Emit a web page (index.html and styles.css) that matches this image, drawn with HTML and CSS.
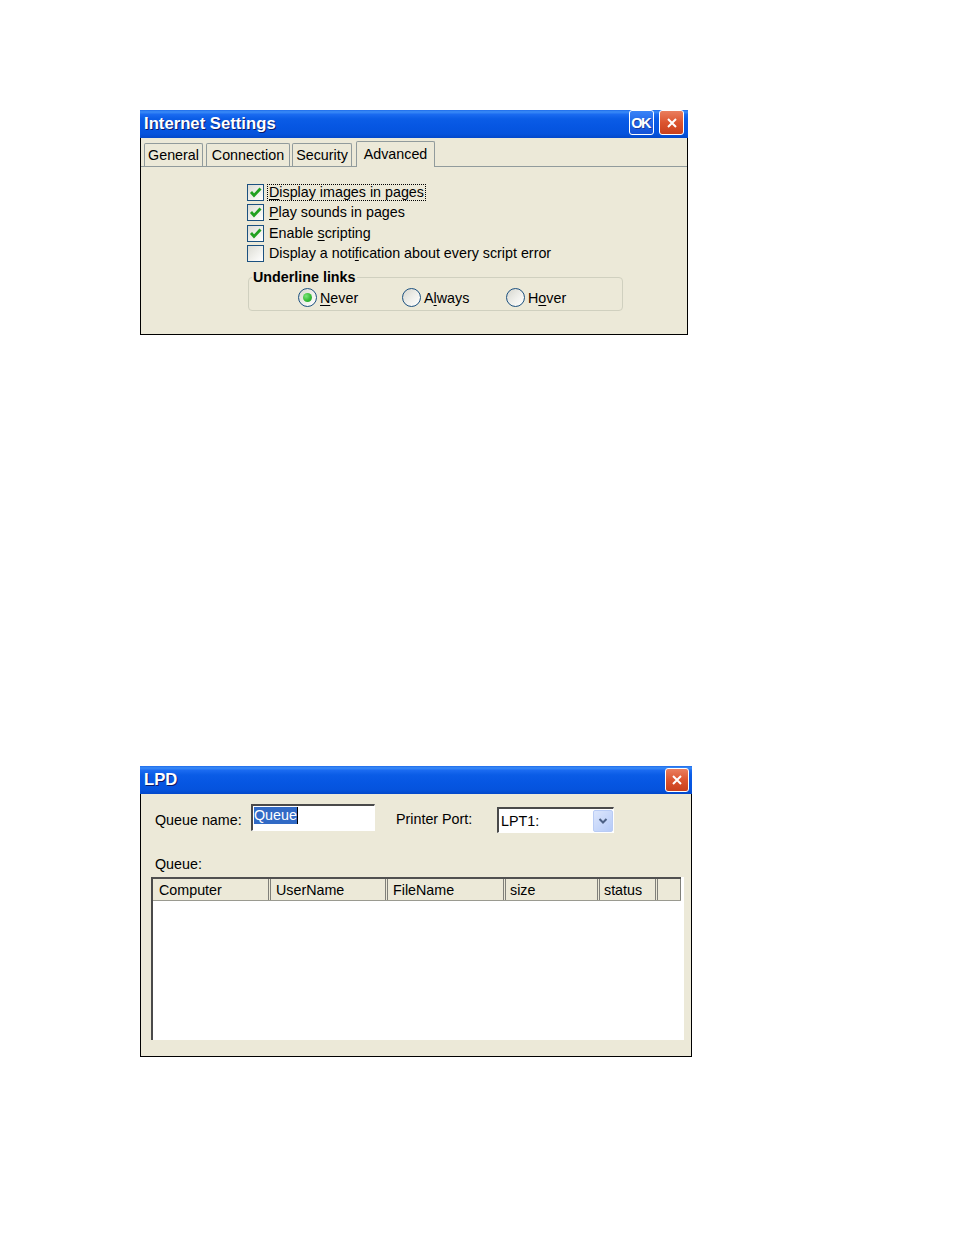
FILE: index.html
```html
<!DOCTYPE html>
<html>
<head>
<meta charset="utf-8">
<title>Settings</title>
<link rel="stylesheet" href="styles.css">
</head>
<body>
<div class="win win-inet">
  <div class="titlebar">
    <span class="title">Internet Settings</span>
    <span class="tb-btn tb-ok">OK</span>
    <span class="tb-btn tb-close"><svg viewBox="0 0 22 22" width="22" height="22"><path d="M7 7 L15 15 M15 7 L7 15" stroke="#fff" stroke-width="2" fill="none"/></svg></span>
  </div>
  <div class="body body-inet">
    <div class="tabs">
      <span class="tab tab-general">General</span>
      <span class="tab tab-conn">Connection</span>
      <span class="tab tab-sec">Security</span>
      <span class="tab tab-adv tab-active">Advanced</span>
      <span class="tab-fill"></span>
    </div>
    <div class="panel">
      <div class="chk-row"><span class="chk"><svg viewBox="0 0 15 15" width="15" height="15"><path d="M3 7 L6 10.5 L12.5 3.5" stroke="#21A121" stroke-width="2.8" fill="none"/></svg></span><span class="lbl focus"><u>D</u>isplay images in pages</span></div>
      <div class="chk-row"><span class="chk"><svg viewBox="0 0 15 15" width="15" height="15"><path d="M3 7 L6 10.5 L12.5 3.5" stroke="#21A121" stroke-width="2.8" fill="none"/></svg></span><span class="lbl"><u>P</u>lay sounds in pages</span></div>
      <div class="chk-row"><span class="chk"><svg viewBox="0 0 15 15" width="15" height="15"><path d="M3 7 L6 10.5 L12.5 3.5" stroke="#21A121" stroke-width="2.8" fill="none"/></svg></span><span class="lbl">Enable <u>s</u>cripting</span></div>
      <div class="chk-row"><span class="chk"></span><span class="lbl">Display a noti<u>f</u>ication about every script error</span></div>
      <fieldset class="group">
        <legend>Underline links</legend>
        <div class="radios">
          <span class="radio-item"><span class="radio on"><span class="dot"></span></span><span class="rlbl"><u>N</u>ever</span></span>
          <span class="radio-item"><span class="radio"></span><span class="rlbl">A<u>l</u>ways</span></span>
          <span class="radio-item"><span class="radio"></span><span class="rlbl">H<u>o</u>ver</span></span>
        </div>
      </fieldset>
    </div>
  </div>
</div>

<div class="win win-lpd">
  <div class="titlebar">
    <span class="title">LPD</span>
    <span class="tb-btn tb-close tb-close-lpd"><svg viewBox="0 0 22 22" width="22" height="22"><path d="M7 7 L15 15 M15 7 L7 15" stroke="#fff" stroke-width="2" fill="none"/></svg></span>
  </div>
  <div class="body body-lpd">
    <div class="row-top">
      <span class="flabel flabel-queue">Queue name:</span>
      <span class="textbox"><span class="sel">Queue</span><span class="caret"></span></span>
      <span class="flabel flabel-port">Printer Port:</span>
      <span class="combo"><span class="combo-text">LPT1:</span><span class="combo-btn"><svg viewBox="0 0 12 8" width="12" height="8"><path d="M2.5 2 L6 5.5 L9.5 2" stroke="#4D6185" stroke-width="2" fill="none"/></svg></span></span>
    </div>
    <div class="queue-label">Queue:</div>
    <div class="list">
      <div class="list-head">
        <span class="hcell hc-computer">Computer</span>
        <span class="hcell hc-user">UserName</span>
        <span class="hcell hc-file">FileName</span>
        <span class="hcell hc-size">size</span>
        <span class="hcell hc-status">status</span>
        <span class="hcell hc-fill"></span>
      </div>
    </div>
  </div>
</div>
</body>
</html>
```
FILE: styles.css
```css
* { box-sizing: border-box; }

body {
  margin: 0;
  background: #fff;
  font-family: "Liberation Sans", Arial, sans-serif;
  font-size: 14.3px;
  color: #000;
}

u { text-decoration: underline; text-underline-offset: 2px; }

.win {
  margin-left: 140px;
  display: flex;
  flex-direction: column;
}
.win-inet { margin-top: 110px; width: 548px; }
.win-lpd { margin-top: 431px; width: 552px; }

.titlebar {
  height: 28px;
  display: flex;
  align-items: flex-start;
  background: linear-gradient(to bottom, #1E6CEB 0%, #3A8BF7 7%, #1A6AF0 16%, #0A5CE6 32%, #0656E2 60%, #0553DD 85%, #0348CA 100%);
}
.title {
  flex: 1;
  color: #fff;
  font-weight: bold;
  font-size: 16.7px;
  line-height: 28px;
  padding-left: 4px;
  text-shadow: 1px 1px 0 #0A1A6A;
}
.tb-btn {
  width: 25px;
  height: 25px;
  border: 1px solid #fff;
  border-radius: 3px;
  display: flex;
  align-items: center;
  justify-content: center;
}
.tb-ok {
  background: linear-gradient(#3A84F7, #1A5FE4 60%, #1552D6);
  color: #fff;
  font-weight: bold;
  font-size: 14.5px;
  letter-spacing: -1.5px;
  padding-right: 2px;
  margin-right: 5px;
  text-shadow: 1px 1px 0 #1A3A9A;
}
.tb-close {
  background: linear-gradient(#EA7E5E, #DC5530 50%, #C9401C);
  margin-right: 4px;
}
.tb-close-lpd {
  width: 24px;
  height: 24px;
  margin-top: 2px;
  margin-right: 3px;
}

.body {
  background: #ECE9D8;
  border: 1px solid #000;
  border-top: 0;
}
.body-inet { height: 197px; }
.body-lpd { height: 263px; }

/* tabs */
.tabs {
  margin-top: 3px;
  height: 26px;
  display: flex;
  align-items: flex-end;
  padding-left: 3px;
  border-bottom: 1px solid #919B9C;
}
.tab {
  height: 23px;
  border: 1px solid #919B9C;
  border-bottom: 0;
  border-radius: 2px 2px 0 0;
  line-height: 22px;
  text-align: center;
  background: #ECE9D8;
  white-space: nowrap;
}
.tab-general { width: 59px; margin-right: 3px; }
.tab-conn { width: 84px; margin-right: 2px; }
.tab-sec { width: 60px; margin-right: 4px; }
.tab-adv { width: 79px; }
.tab-active {
  height: 26px;
  margin-bottom: -1px;
  line-height: 24px;
}
.tab-fill { flex: 1; }

.panel { padding: 15px 0 0 106px; }

.chk-row {
  height: 20.5px;
  display: flex;
  align-items: center;
}
.chk {
  width: 17px;
  height: 17px;
  border: 1px solid #1C5180;
  background: linear-gradient(135deg, #DCDCD4 0%, #F2F2EE 60%, #FFFFFF 100%);
  display: flex;
}
.lbl {
  margin-left: 3px;
  padding: 0 1px;
  line-height: 15px;
  border: 1px dotted transparent;
  white-space: nowrap;
}
.lbl.focus { border-color: #000; }

.group {
  margin: 5px 0 0 1px;
  width: 375px;
  min-width: 0;
  padding: 3px 0 3px 0;
  border: 1px solid #D0D0BF;
  border-radius: 4px;
}
.group legend {
  margin-left: 3px;
  padding: 0 1px;
  font-weight: bold;
  line-height: 16px;
}
.radios { display: flex; padding-left: 49px; }
.radio-item {
  width: 104px;
  display: flex;
  align-items: center;
}
.radio {
  width: 19px;
  height: 19px;
  border-radius: 50%;
  border: 1px solid #1C5180;
  background: linear-gradient(135deg, #D6D6CE 0%, #F0F0EC 55%, #FFFFFF 100%);
  display: flex;
  align-items: center;
  justify-content: center;
}
.dot {
  width: 9px;
  height: 9px;
  border-radius: 50%;
  background: radial-gradient(circle at 35% 35%, #7CE57C 0%, #3BBF3B 50%, #1E9A1E 100%);
}
.rlbl { margin-left: 3px; }

/* LPD */
.row-top {
  display: flex;
  align-items: flex-start;
  height: 39px;
}
.flabel {
  line-height: 16px;
  white-space: nowrap;
}
.flabel-queue { margin: 18px 0 0 14px; width: 96px; }
.flabel-port { margin: 17px 0 0 21px; width: 101px; }
.textbox {
  width: 124px;
  height: 27px;
  margin-top: 10px;
  background: #fff;
  border-style: solid;
  border-width: 2px 1px 1px 2px;
  border-color: #4A4A4A #FFFFFF #FFFFFF #4A4A4A;
  padding: 1px;
  display: flex;
  align-items: flex-start;
}
.sel {
  background: #316AC5;
  color: #fff;
  line-height: 17px;
}
.caret {
  width: 1px;
  height: 17px;
  background: #000;
}
.combo {
  width: 117px;
  height: 26px;
  margin-top: 13px;
  background: #fff;
  border-style: solid;
  border-width: 2px 1px 1px 2px;
  border-color: #4A4A4A #FFFFFF #FFFFFF #4A4A4A;
  display: flex;
  align-items: center;
}
.combo-text { flex: 1; padding-left: 2px; }
.combo-btn {
  width: 20px;
  height: 22px;
  border: 1px solid #B9CCF5;
  border-radius: 2px;
  background: linear-gradient(135deg, #DCE6FC, #B6CBF8);
  display: flex;
  align-items: center;
  justify-content: center;
}

.queue-label {
  margin: 23px 0 0 14px;
  line-height: 16px;
}
.list {
  margin: 5px 0 0 10px;
  width: 533px;
  height: 163px;
  background: #fff;
  border-left: 2px solid #4A4A4A;
}
.list-head {
  display: flex;
  width: 528px;
  height: 24px;
  border-top: 2px solid #505050;
  border-bottom: 1px solid #9A9A90;
  background: #ECE9D8;
}
.hcell {
  height: 21px;
  line-height: 22px;
  padding-left: 5px;
  border-right: 3px double #80807A;
  white-space: nowrap;
}
.hc-computer { width: 118px; padding-left: 6px; }
.hc-user { width: 117px; }
.hc-file { width: 118px; }
.hc-size { width: 94px; padding-left: 4px; }
.hc-status { width: 58px; padding-left: 4px; }
.hc-fill { width: 23px; border-right: 1px solid #80807A; }
```
